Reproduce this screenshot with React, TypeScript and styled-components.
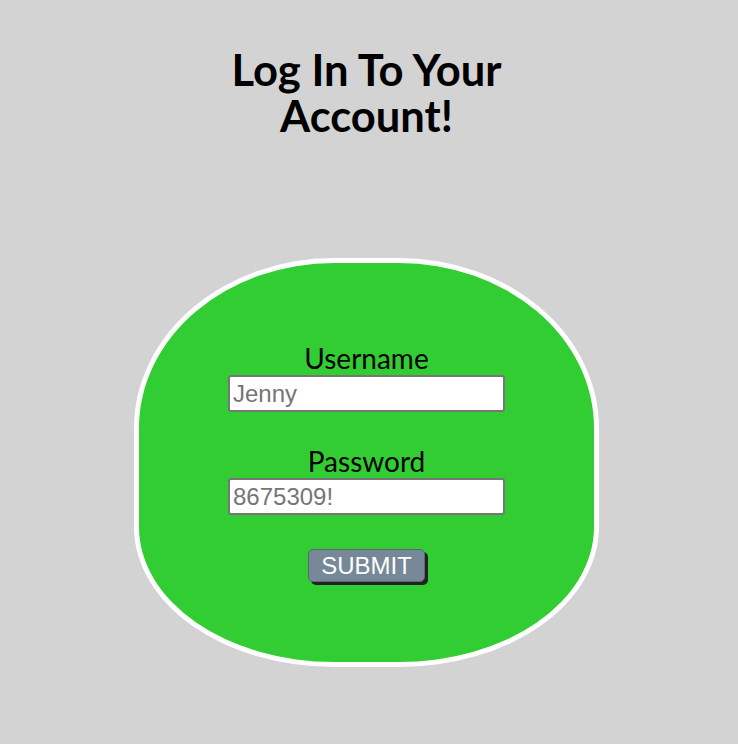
import React from "react";
import styled, { createGlobalStyle } from "styled-components";

const GlobalStyle = createGlobalStyle`
  html, body {
    margin: 0;
    padding: 0;
    background: #d3d3d3;
  }
  body {
    font-family: Lato, "Open Sans", sans-serif;
  }
`;

const Page = styled.div`
  width: 733px;
  display: flex;
  flex-direction: column;
  align-items: center;
  padding-top: 46px;
`;

const Title = styled.h1`
  margin: 0;
  width: 300px;
  text-align: center;
  font-family: Lato, sans-serif;
  font-weight: 700;
  font-size: 43.5px;
  line-height: 46px;
  color: #000;
`;

const Card = styled.form`
  box-sizing: border-box;
  margin-top: 120px;
  width: 465px;
  height: 409px;
  background: #32cd32;
  border: 5px solid #fff;
  border-radius: 200px 200px 200px 200px / 170px 170px 140px 140px;
  display: flex;
  flex-direction: column;
  align-items: center;
  justify-content: center;
`;

const Label = styled.label<{ $gap: number }>`
  display: block;
  margin-top: ${(p) => p.$gap}px;
  margin-bottom: 2px;
  font-family: Lato, sans-serif;
  font-size: 28px;
  line-height: 30px;
  color: #000;
`;

const Input = styled.input`
  box-sizing: border-box;
  width: 277px;
  height: 37px;
  margin: 0;
  padding: 1px 3px;
  border: 2px solid #767676;
  border-radius: 3px;
  background: #fff;
  font-family: "Liberation Sans", Arial, sans-serif;
  font-size: 24px;
  outline: none;
  &::placeholder {
    color: #757575;
  }
`;

const Submit = styled.button`
  margin-top: 34px;
  padding: 2px 12px;
  border: 1px solid #5d6772;
  border-radius: 5px;
  background: #778899;
  color: #fff;
  font-family: "Liberation Sans", Arial, sans-serif;
  font-size: 24px;
  line-height: 27px;
  box-shadow: 3px 3px 0 #222;
  cursor: pointer;
`;

export default function App() {
  return (
    <>
      <GlobalStyle />
      <Page>
        <Title>Log In To Your Account!</Title>
        <Card onSubmit={(e) => e.preventDefault()}>
          <Label htmlFor="username" $gap={0}>
            Username
          </Label>
          <Input id="username" type="text" placeholder="Jenny" />
          <Label htmlFor="password" $gap={34}>
            Password
          </Label>
          <Input id="password" type="text" placeholder="8675309!" />
          <Submit type="submit">SUBMIT</Submit>
        </Card>
      </Page>
    </>
  );
}
